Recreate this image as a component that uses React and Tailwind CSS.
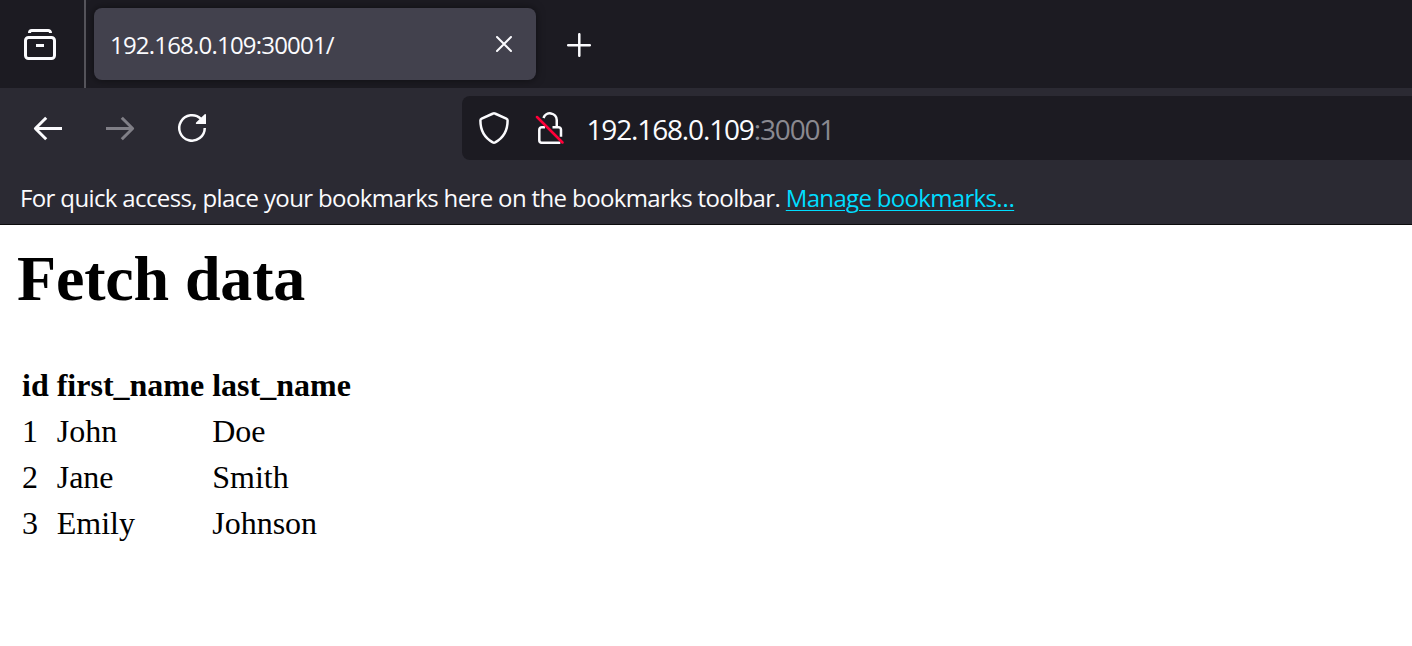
const people = [
  { id: 1, first: 'John', last: 'Doe' },
  { id: 2, first: 'Jane', last: 'Smith' },
  { id: 3, first: 'Emily', last: 'Johnson' },
];

function RecentIcon() {
  return (
    <svg className="h-8 w-8" viewBox="0 0 32 32" fill="none" stroke="#fbfbfe" strokeWidth="3">
      <path d="M5.500 5V4.800A2.300 2.300 0 0 1 7.800 2.500h16.400A2.300 2.300 0 0 1 26.500 4.800V5" />
      <rect x="1.500" y="9.500" width="29" height="21" rx="3" />
      <path d="M12 17.500h8" />
    </svg>
  );
}

function CloseIcon() {
  return (
    <svg className="h-4 w-4" viewBox="0 0 16 16" fill="none" stroke="#fbfbfe" strokeWidth="2" strokeLinecap="round">
      <path d="M1 1l14 14M15 1L1 15" />
    </svg>
  );
}

function PlusIcon() {
  return (
    <svg className="h-6 w-6" viewBox="0 0 24 24" fill="none" stroke="#fbfbfe" strokeWidth="2.5" strokeLinecap="round">
      <path d="M12.300 1.200v21.600M1.200 12.300h21.600" />
    </svg>
  );
}

function BackIcon() {
  return (
    <svg className="h-8 w-8" viewBox="0 0 32 32" fill="none" stroke="#fbfbfe" strokeWidth="3">
      <path d="M30 16.500H4" />
      <path d="M14.200 5.700L3.400 16.500l10.800 10.800" strokeLinejoin="round" />
    </svg>
  );
}

function ForwardIcon() {
  return (
    <svg className="h-8 w-8" viewBox="0 0 32 32" fill="none" stroke="#807f87" strokeWidth="3">
      <path d="M2 16.500h26" />
      <path d="M17.800 5.700L28.600 16.500 17.800 27.300" strokeLinejoin="round" />
    </svg>
  );
}

function ReloadIcon() {
  return (
    <svg className="h-8 w-8" viewBox="0 0 32 32" fill="none">
      <path d="M25 6.950A12.750 12.750 0 1 0 28.750 16" stroke="#fbfbfe" strokeWidth="2.500" />
      <path d="M30 2.800V12h-9.200c-.9 0-1.300-1-.7-1.600l8.600-8.200c.5-.5 1.300-.2 1.300.6z" fill="#fbfbfe" />
    </svg>
  );
}

function ShieldIcon() {
  return (
    <svg className="h-8 w-8" viewBox="0 0 32 32" fill="none" stroke="#fbfbfe" strokeWidth="2.500" strokeLinejoin="round">
      <path d="M15.100 1.500c.6-.3 1.200-.3 1.800 0L28.300 6.700c.8.400 1.300 1 1.300 1.900 0 9.800-4.600 17.600-12.400 21.800-.8.400-1.600.4-2.400 0C7 26.200 2.400 18.400 2.400 8.600c0-.9.500-1.500 1.300-1.900z" />
    </svg>
  );
}

function InsecureIcon() {
  return (
    <svg className="h-8 w-8" viewBox="0 0 32 32" fill="none" stroke="#fbfbfe" strokeWidth="2.500">
      <path d="M9.500 6A6.800 6.800 0 0 1 22.750 8v7.200" />
      <path d="M18.500 15.200H24.500a2.500 2.500 0 0 1 2.500 2.500v7" />
      <path d="M11 15.200H7.800a2.500 2.500 0 0 0-2.500 2.500v10.600a2.500 2.500 0 0 0 2.500 2.500h18.500" />
      <path d="M3 5l25.500 25.500" stroke="#ff0039" strokeLinecap="round" />
    </svg>
  );
}

function TabStrip() {
  return (
    <div className="flex h-[88px] items-center bg-[#1c1b22]">
      <div className="flex h-full w-[86px] items-center border-r-2 border-[#55545b] pl-6">
        <RecentIcon />
      </div>
      <div className="ml-2 flex h-[72px] w-[442px] items-center justify-between rounded-lg bg-[#42414d] pr-6 pl-4 shadow-[0_0_8px_rgba(0,0,0,0.5)]">
        <span className="pt-0.5 text-[24px] tracking-[-0.8px] text-[#fbfbfe]">192.168.0.109:30001/</span>
        <CloseIcon />
      </div>
      <div className="ml-[31px] pt-0.5">
        <PlusIcon />
      </div>
    </div>
  );
}

function NavBar() {
  return (
    <div className="flex h-20 items-center bg-[#2b2a33] pl-8">
      <div className="flex gap-10">
        <BackIcon />
        <ForwardIcon />
        <ReloadIcon />
      </div>
      <div className="ml-[254px] flex h-16 flex-1 items-center rounded-l-lg bg-[#1c1b22] pl-4">
        <ShieldIcon />
        <div className="ml-6">
          <InsecureIcon />
        </div>
        <div className="ml-[20.500px] pt-0.5 text-[28px] tracking-[-1.150px] whitespace-nowrap text-[#fbfbfe]">
          192.168.0.109<span className="text-[#8a8990]">:30001</span>
        </div>
      </div>
    </div>
  );
}

function BookmarksBar() {
  return (
    <div className="flex h-[57px] items-center border-b border-[#0c0c0d] bg-[#2b2a33] pt-[3px] pl-5 text-[24px] whitespace-pre text-[#fbfbfe]">
      <span className="tracking-[-0.630px]">For quick access, place your bookmarks here on the bookmarks toolbar. </span>
      <a className="tracking-[-0.680px] text-[#00ddff] underline decoration-1 underline-offset-[3px]">Manage bookmarks…</a>
    </div>
  );
}

export default function App() {
  return (
    <div className="flex h-[646px] w-[1412px] flex-col overflow-hidden bg-white font-['Open_Sans',sans-serif]">
      <TabStrip />
      <NavBar />
      <BookmarksBar />
      <main className="px-4 pt-[17px] font-['Liberation_Serif',serif] text-black">
        <h1 className="pl-px text-[64px] leading-[74px] font-bold tracking-[-0.150px]">Fetch data</h1>
        <table className="mt-11 border-separate border-spacing-1 text-[32px] leading-[38px]">
          <thead>
            <tr>
              <th className="p-0.5">id</th>
              <th className="p-0.5">first_name</th>
              <th className="p-0.5">last_name</th>
            </tr>
          </thead>
          <tbody>
            {people.map((p) => (
              <tr key={p.id}>
                <td className="p-0.5">{p.id}</td>
                <td className="p-0.5">{p.first}</td>
                <td className="p-0.5">{p.last}</td>
              </tr>
            ))}
          </tbody>
        </table>
      </main>
    </div>
  );
}
